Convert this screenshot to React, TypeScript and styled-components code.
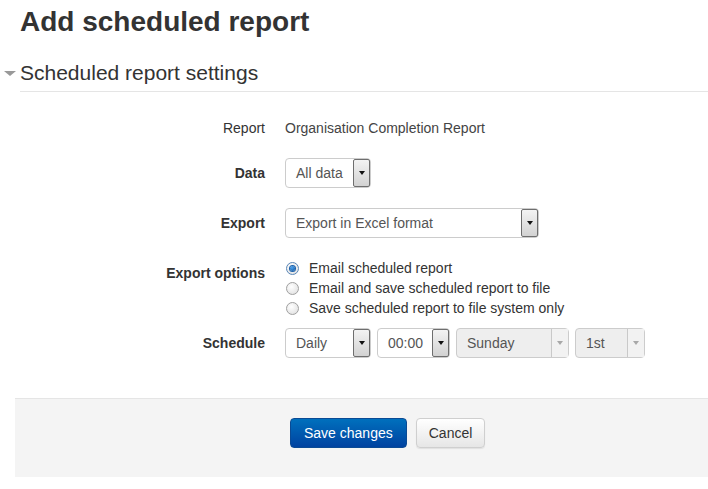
import React from "react";
import styled, { createGlobalStyle, css } from "styled-components";

const GlobalStyle = createGlobalStyle`
  html, body {
    margin: 0;
    padding: 0;
    background: #fff;
  }
  body {
    font-family: "Liberation Sans", Arial, sans-serif;
    font-size: 14px;
    color: #333;
  }
`;

const Page = styled.div`
  width: 708px;
  height: 489px;
  overflow: hidden;
  padding-left: 20px;
  box-sizing: border-box;
`;

const Title = styled.h2`
  margin: 2px 0 0;
  font-size: 28px;
  line-height: 40px;
  font-weight: bold;
  color: #333;
`;

const Legend = styled.div`
  display: flex;
  align-items: center;
  gap: 4px;
  margin: 16px 0 0 -16px;
`;

const Caret = styled.span`
  width: 0;
  height: 0;
  border-left: 6px solid transparent;
  border-right: 6px solid transparent;
  border-top: 5px solid #999;
  margin-top: -4px;
`;

const LegendText = styled.div`
  flex: 1;
  font-size: 21px;
  line-height: 30px;
  color: #333;
  padding-bottom: 3px;
  border-bottom: 1px solid #e5e5e5;
`;

const Form = styled.div`
  display: flex;
  flex-direction: column;
  margin-top: 26px;
`;

const Row = styled.div<{ $gap?: number }>`
  display: grid;
  grid-template-columns: 245px 1fr;
  column-gap: 20px;
  margin-bottom: ${({ $gap }) => ($gap ?? 20)}px;
`;

const Label = styled.div<{ $plain?: boolean }>`
  text-align: right;
  line-height: 20px;
  padding-top: ${({ $plain }) => ($plain ? 0 : 5)}px;
  font-weight: ${({ $plain }) => ($plain ? "normal" : "bold")};
  color: #333;
`;

const StaticValue = styled.div`
  line-height: 20px;
  color: #444;
`;

const Controls = styled.div`
  display: flex;
  gap: 6px;
`;

const SelectBox = styled.div<{ $width: number; $disabled?: boolean }>`
  position: relative;
  width: ${({ $width }) => $width}px;
  height: 30px;
  box-sizing: border-box;
  border: 1px solid #ccc;
  border-radius: 4px;
  background: ${({ $disabled }) => ($disabled ? "#eee" : "#fff")};
  color: #555;
  line-height: 28px;
  padding-left: 10px;
  white-space: nowrap;
`;

const ArrowButton = styled.span<{ $disabled?: boolean }>`
  position: absolute;
  top: 0;
  right: 0;
  bottom: 0;
  width: 17px;
  box-sizing: border-box;
  display: flex;
  align-items: center;
  justify-content: center;
  ${({ $disabled }) =>
    $disabled
      ? css`
          border-left: 1px solid #c9c9c9;
          background: #f2f2f2;
        `
      : css`
          border: 1px solid #6e6e6e;
          border-radius: 2px;
          background: linear-gradient(#f3f3f3, #d2d2d2);
        `}

  &::after {
    content: "";
    width: 0;
    height: 0;
    border-left: 3.5px solid transparent;
    border-right: 3.5px solid transparent;
    border-top: 4px solid ${({ $disabled }) => ($disabled ? "#a8a8a8" : "#111")};
  }
`;

const RadioList = styled.div`
  display: flex;
  flex-direction: column;
`;

const RadioLine = styled.label`
  display: flex;
  align-items: center;
  gap: 10px;
  height: 20px;
  color: #333;
`;

const RadioDot = styled.span<{ $checked?: boolean }>`
  width: 13px;
  height: 13px;
  box-sizing: border-box;
  border-radius: 50%;
  border: 1px solid #a0a0a0;
  background: radial-gradient(circle at 40% 35%, #fff, #dcdcdc);
  display: flex;
  align-items: center;
  justify-content: center;
  margin-left: 1px;

  ${({ $checked }) =>
    $checked &&
    css`
      border-color: #5a87b8;
      &::after {
        content: "";
        width: 5px;
        height: 5px;
        border-radius: 50%;
        background: radial-gradient(circle at 40% 35%, #4aa3f0, #0b4f9a);
        box-shadow: 0 0 0 1px #1c5fa8;
      }
    `}
`;

const Footer = styled.div`
  margin: 40px 0 0 -5px;
  height: 79px;
  box-sizing: border-box;
  border-top: 1px solid #e5e5e5;
  background: #f4f4f4;
  display: flex;
  align-items: flex-start;
  padding: 19px 0 0 275px;
  gap: 9px;
`;

const Button = styled.button<{ $primary?: boolean }>`
  height: 30px;
  padding: 0 12px;
  font-family: "Liberation Sans", Arial, sans-serif;
  font-size: 14px;
  border-radius: 4px;
  cursor: pointer;
  ${({ $primary }) =>
    $primary
      ? css`
          color: #fff;
          border: 1px solid #0a4a94;
          background: linear-gradient(#0070bd, #0042a0);
          padding: 0 13px;
        `
      : css`
          color: #333;
          border: 1px solid #cfcfcf;
          background: linear-gradient(#fff, #e6e6e6);
          box-shadow: 0 1px 1px rgba(0, 0, 0, 0.08);
        `}
`;

type SelectProps = { value: string; width: number; disabled?: boolean };

const Select = ({ value, width, disabled }: SelectProps) => (
  <SelectBox $width={width} $disabled={disabled}>
    {value}
    <ArrowButton $disabled={disabled} />
  </SelectBox>
);

const exportOptions = [
  "Email scheduled report",
  "Email and save scheduled report to file",
  "Save scheduled report to file system only",
];

export default function App() {
  return (
    <>
      <GlobalStyle />
      <Page>
        <Title>Add scheduled report</Title>
        <Legend>
          <Caret />
          <LegendText>Scheduled report settings</LegendText>
        </Legend>
        <Form>
          <Row>
            <Label $plain>Report</Label>
            <StaticValue>Organisation Completion Report</StaticValue>
          </Row>
          <Row>
            <Label>Data</Label>
            <Controls>
              <Select value="All data" width={86} />
            </Controls>
          </Row>
          <Row>
            <Label>Export</Label>
            <Controls>
              <Select value="Export in Excel format" width={254} />
            </Controls>
          </Row>
          <Row $gap={10}>
            <Label>Export options</Label>
            <RadioList>
              {exportOptions.map((opt, i) => (
                <RadioLine key={opt}>
                  <RadioDot $checked={i === 0} />
                  {opt}
                </RadioLine>
              ))}
            </RadioList>
          </Row>
          <Row $gap={0}>
            <Label>Schedule</Label>
            <Controls>
              <Select value="Daily" width={86} />
              <Select value="00:00" width={73} />
              <Select value="Sunday" width={113} disabled />
              <Select value="1st" width={70} disabled />
            </Controls>
          </Row>
        </Form>
        <Footer>
          <Button $primary>Save changes</Button>
          <Button>Cancel</Button>
        </Footer>
      </Page>
    </>
  );
}
